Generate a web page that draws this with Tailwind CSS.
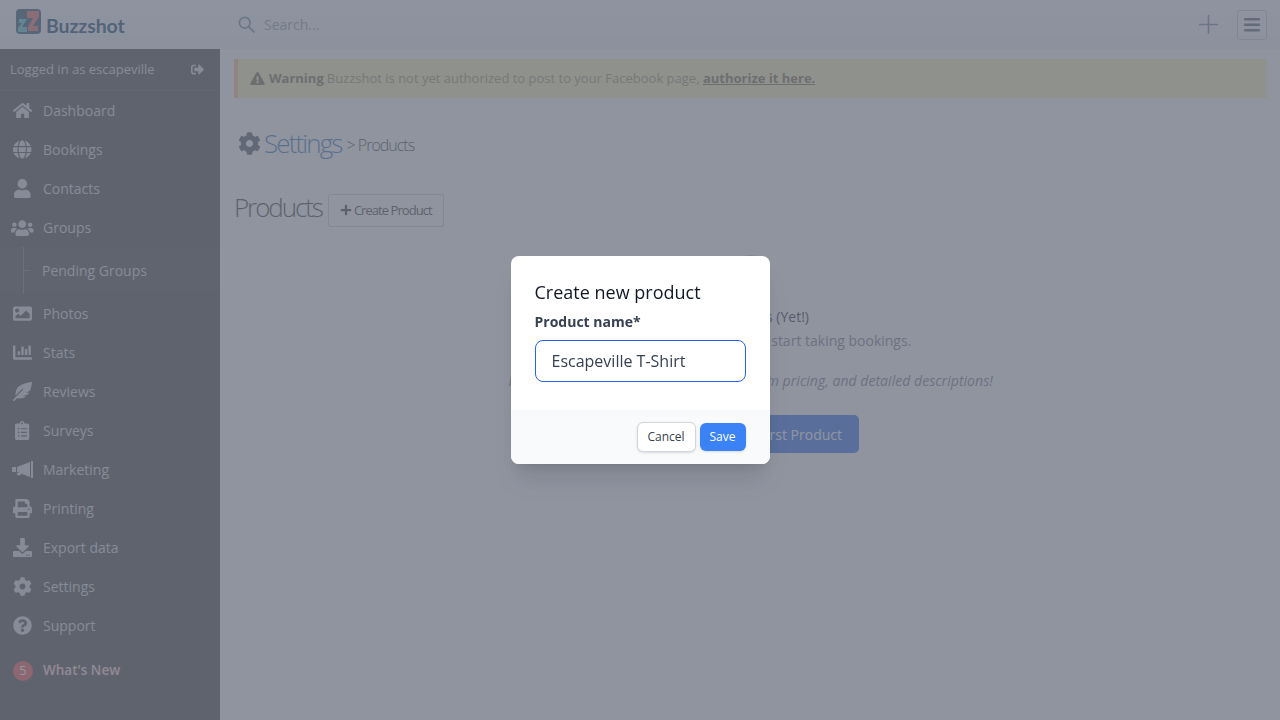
<!DOCTYPE html>
<html lang="en">
<head>
  <meta charset="UTF-8">
  <meta name="viewport" content="width=device-width, initial-scale=1.0">
  <title>Buzzshot - Products</title>
  <script src="https://cdn.jsdelivr.net/npm/@tailwindcss/browser@4"></script>
</head>
<body class="h-screen overflow-hidden flex flex-col bg-[#fbfbfc] font-['Open_Sans',sans-serif] text-[#333]">

  <!-- top bar -->
  <header class="h-[49px] shrink-0 flex items-center bg-gradient-to-b from-[#f8f9fb] to-[#eceef2]">
    <div class="w-[220px] shrink-0 flex items-center pl-[16px]">
      <svg class="w-[25px] h-[25px] -mt-[7px]" viewBox="0 0 25 25">
        <rect width="25" height="25" rx="4" fill="#1d4766"/>
        <path d="M3 10h8l-5 8h5v5H2v-4l4-5H3z" fill="#4cc0c0"/>
        <path d="M11 2h12v6l-6 9h5v5H12v-4l5-9h-6z" fill="#e8605a"/>
      </svg>
      <span class="ml-[5px] mt-[2px] text-[19.500px] leading-none font-bold tracking-[-0.1px] text-[#0b3a63] font-['Lato',sans-serif]">Buzzshot</span>
    </div>
    <div class="flex-1 flex items-center pl-[18px] pr-[13px]">
      <svg class="w-[17px] h-[17px]" viewBox="0 0 24 24" fill="none" stroke="#6a8299" stroke-width="2.400" stroke-linecap="round"><circle cx="9.500" cy="9.500" r="7.500"/><path d="M15 15l7.500 7.500"/></svg>
      <span class="ml-[9px] text-[14px] text-[#8a96a8]">Search...</span>
      <svg class="ml-auto w-[19px] h-[19px]" viewBox="0 0 19 19" stroke="#6f8098" stroke-width="1.600"><path d="M9.500 0v19M0 9.500h19"/></svg>
      <div class="ml-[19px] w-[30px] h-[30px] flex items-center justify-center rounded-[3px] border border-[#c0c3ca]">
        <svg class="w-[16px] h-[14px]" viewBox="0 0 16 14" fill="#4b5563"><rect width="16" height="2.600" rx="1" y="0"/><rect width="16" height="2.600" rx="1" y="5.500"/><rect width="16" height="2.600" rx="1" y="11"/></svg>
      </div>
    </div>
  </header>

  <div class="flex-1 flex min-h-0">
    <!-- sidebar -->
    <aside class="w-[220px] shrink-0 bg-[#3c3a3a] text-[#d5d6da] text-[14px]">
      <div class="h-[42px] flex items-center justify-between pl-[10px] pr-[16px] border-b border-[#4a4a4c] text-[13px]">
        <span>Logged in as escapeville</span>
        <svg class="w-[13px] h-[13px]" viewBox="0 0 512 512" fill="currentColor"><path d="M497 273L329 441c-15 15-41 4.500-41-17v-96H152c-13.300 0-24-10.700-24-24v-96c0-13.300 10.700-24 24-24h136V88c0-21.400 25.900-32 41-17l168 168c9.300 9.400 9.300 24.600 0 34zM192 436v-40c0-6.600-5.400-12-12-12H96c-17.700 0-32-14.300-32-32V160c0-17.700 14.300-32 32-32h84c6.600 0 12-5.400 12-12V76c0-6.600-5.400-12-12-12H96c-53 0-96 43-96 96v192c0 53 43 96 96 96h84c6.600 0 12-5.400 12-12z"/></svg>
      </div>
      <nav class="flex flex-col">
        <a class="h-[39px] flex items-center"><span class="w-[43px] flex justify-center pl-[2px]"><svg class="h-[17px]" viewBox="0 0 576 512" fill="currentColor"><path d="M280.370 148.260L96 300.110V464a16 16 0 0 0 16 16l112.060-.29a16 16 0 0 0 15.920-16V368a16 16 0 0 1 16-16h64a16 16 0 0 1 16 16v95.640a16 16 0 0 0 16 16.050L464 480a16 16 0 0 0 16-16V300L295.670 148.260a12.190 12.190 0 0 0-15.300 0zM571.600 251.470L488 182.560V44.050a12 12 0 0 0-12-12h-56a12 12 0 0 0-12 12v72.610L318.470 43a48 48 0 0 0-61 0L4.340 251.470a12 12 0 0 0-1.600 16.900l25.500 31A12 12 0 0 0 45.150 301l235.220-193.740a12.190 12.190 0 0 1 15.300 0L530.900 301a12 12 0 0 0 16.900-1.600l25.500-31a12 12 0 0 0-1.700-16.930z"/></svg></span>Dashboard</a>
        <a class="h-[39px] flex items-center"><span class="w-[43px] flex justify-center pl-[2px]"><svg class="h-[19px]" viewBox="0 0 496 512" fill="currentColor"><path d="M336.500 160C322 70.700 287.800 8 248 8s-74 62.700-88.500 152h177zM152 256c0 22.200 1.200 43.500 3.300 64h185.300c2.100-20.500 3.300-41.800 3.300-64s-1.200-43.500-3.300-64H155.300c-2.100 20.500-3.300 41.800-3.300 64zm324.700-96c-28.600-67.900-86.500-120.400-158-141.600 24.400 33.800 41.200 84.700 50 141.600h108zM177.200 18.400C105.800 39.600 47.800 92.100 19.300 160h108c8.700-56.900 25.500-107.800 49.900-141.600zM487.400 192H372.700c2.100 21 3.300 42.500 3.300 64s-1.200 43-3.300 64h114.600c5.500-20.500 8.600-41.800 8.600-64s-3.100-43.500-8.500-64zM120 256c0-21.500 1.200-43 3.300-64H8.600C3.200 212.500 0 233.800 0 256s3.200 43.500 8.600 64h114.600c-2-21-3.200-42.500-3.200-64zm39.500 96c14.500 89.300 48.700 152 88.500 152s74-62.700 88.500-152h-177zm159.300 141.600c71.400-21.200 129.400-73.700 158-141.600h-108c-8.800 56.900-25.600 107.800-50 141.600zM19.300 352c28.600 67.900 86.500 120.400 158 141.600-24.400-33.800-41.200-84.700-50-141.600h-108z"/></svg></span>Bookings</a>
        <a class="h-[39px] flex items-center"><span class="w-[43px] flex justify-center pl-[2px]"><svg class="h-[19px]" viewBox="0 0 448 512" fill="currentColor"><path d="M224 256c70.700 0 128-57.300 128-128S294.700 0 224 0 96 57.300 96 128s57.300 128 128 128zm89.600 32h-16.700c-22.200 10.200-46.900 16-72.900 16s-50.600-5.800-72.900-16h-16.700C60.200 288 0 348.200 0 422.400V464c0 26.500 21.500 48 48 48h352c26.500 0 48-21.500 48-48v-41.600c0-74.200-60.200-134.400-134.400-134.400z"/></svg></span>Contacts</a>
        <a class="h-[39px] flex items-center"><span class="w-[43px] flex justify-center pl-[2px]"><svg class="h-[18px]" viewBox="0 0 640 512" fill="currentColor"><path d="M96 224c35.300 0 64-28.700 64-64s-28.700-64-64-64-64 28.700-64 64 28.700 64 64 64zm448 0c35.300 0 64-28.700 64-64s-28.700-64-64-64-64 28.700-64 64 28.700 64 64 64zm32 32h-64c-17.600 0-33.500 7.100-45.100 18.600 40.300 22.100 68.900 62 75.100 109.400h66c17.700 0 32-14.300 32-32v-32c0-35.300-28.700-64-64-64zm-256 0c61.900 0 112-50.100 112-112S381.900 32 320 32 208 82.100 208 144s50.100 112 112 112zm76.800 32h-8.300c-20.800 10-43.900 16-68.500 16s-47.600-6-68.500-16h-8.300C179.600 288 128 339.600 128 403.200V432c0 26.500 21.500 48 48 48h288c26.500 0 48-21.500 48-48v-28.800c0-63.600-51.600-115.200-115.200-115.200zm-223.700-13.400C161.500 263.100 145.600 256 128 256H64c-35.300 0-64 28.700-64 64v32c0 17.700 14.300 32 32 32h65.900c6.300-47.400 34.900-87.300 75.200-109.400z"/></svg></span>Groups</a>
        <div class="relative h-[47px] flex items-center pl-[42px] bg-[#403e3e]">
          <span class="absolute left-[23px] top-0 bottom-0 w-px bg-[#6e6e72]"></span>
          <span class="absolute left-[23px] top-[23px] w-[8px] h-px bg-[#6e6e72]"></span>
          Pending Groups
        </div>
        <a class="h-[39px] flex items-center"><span class="w-[43px] flex justify-center pl-[2px]"><svg class="h-[19px]" viewBox="0 0 512 512" fill="currentColor"><path d="M464 448H48c-26.510 0-48-21.490-48-48V112c0-26.510 21.490-48 48-48h416c26.510 0 48 21.490 48 48v288c0 26.510-21.490 48-48 48zM112 120c-30.928 0-56 25.072-56 56s25.072 56 56 56 56-25.072 56-56-25.072-56-56-56zM64 384h384V272l-87.515-87.515c-4.686-4.686-12.284-4.686-16.971 0L208 320l-55.515-55.515c-4.686-4.686-12.284-4.686-16.971 0L64 336v48z"/></svg></span>Photos</a>
        <a class="h-[39px] flex items-center"><span class="w-[43px] flex justify-center pl-[2px]"><svg class="h-[19px]" viewBox="0 0 512 512" fill="currentColor"><path d="M332.800 320h38.400c6.400 0 12.800-6.400 12.800-12.800V172.800c0-6.400-6.400-12.800-12.800-12.800h-38.400c-6.400 0-12.800 6.400-12.800 12.800v134.400c0 6.400 6.400 12.800 12.800 12.800zm96 0h38.400c6.400 0 12.800-6.400 12.800-12.800V76.800c0-6.400-6.400-12.800-12.800-12.800h-38.400c-6.400 0-12.800 6.400-12.800 12.800v230.400c0 6.400 6.400 12.800 12.800 12.800zm-288 0h38.400c6.400 0 12.800-6.400 12.800-12.800v-70.400c0-6.400-6.400-12.800-12.800-12.800h-38.400c-6.400 0-12.800 6.400-12.800 12.800v70.400c0 6.400 6.400 12.800 12.800 12.800zm96 0h38.400c6.400 0 12.800-6.400 12.800-12.800V108.800c0-6.400-6.400-12.800-12.800-12.800h-38.400c-6.400 0-12.800 6.400-12.800 12.800v198.400c0 6.400 6.400 12.800 12.800 12.800zM496 384H64V80c0-8.840-7.160-16-16-16H16C7.160 64 0 71.160 0 80v336c0 17.670 14.330 32 32 32h464c8.840 0 16-7.160 16-16v-32c0-8.840-7.160-16-16-16z"/></svg></span>Stats</a>
        <a class="h-[39px] flex items-center"><span class="w-[43px] flex justify-center pl-[2px]"><svg class="h-[19px]" viewBox="0 0 512 512" fill="currentColor"><path d="M512 0C460.220 3.560 96.440 38.200 71.010 287.610c-3.090 26.660-4.840 53.440-5.990 80.240l178.870-178.690c6.250-6.250 16.400-6.250 22.650 0s6.250 16.380 0 22.630L7.040 471.030c-9.380 9.370-9.380 24.570 0 33.940 9.380 9.370 24.590 9.370 33.980 0l57.130-57.070c42.090-.14 84.150-2.530 125.960-7.360 53.480-5.440 97.020-26.470 132.580-56.540H255.740l146.790-48.880c11.250-14.890 21.370-30.710 30.450-47.120h-81.140l106.540-53.210C500.290 132.860 510.190 26.260 512 0z"/></svg></span>Reviews</a>
        <a class="h-[39px] flex items-center"><span class="w-[43px] flex justify-center pl-[2px]"><svg class="h-[19px]" viewBox="0 0 384 512" fill="currentColor"><path d="M336 64h-80c0-35.300-28.700-64-64-64s-64 28.700-64 64H48C21.500 64 0 85.500 0 112v352c0 26.500 21.500 48 48 48h288c26.500 0 48-21.500 48-48V112c0-26.500-21.500-48-48-48zM96 424c-13.300 0-24-10.700-24-24s10.700-24 24-24 24 10.700 24 24-10.700 24-24 24zm0-96c-13.300 0-24-10.700-24-24s10.700-24 24-24 24 10.700 24 24-10.700 24-24 24zm0-96c-13.300 0-24-10.700-24-24s10.700-24 24-24 24 10.700 24 24-10.700 24-24 24zm96-192c13.300 0 24 10.700 24 24s-10.700 24-24 24-24-10.700-24-24 10.700-24 24-24zm128 368c0 4.400-3.600 8-8 8H168c-4.400 0-8-3.600-8-8v-16c0-4.400 3.600-8 8-8h144c4.400 0 8 3.600 8 8v16zm0-96c0 4.400-3.600 8-8 8H168c-4.400 0-8-3.600-8-8v-16c0-4.400 3.600-8 8-8h144c4.400 0 8 3.600 8 8v16zm0-96c0 4.400-3.600 8-8 8H168c-4.400 0-8-3.600-8-8v-16c0-4.400 3.600-8 8-8h144c4.400 0 8 3.600 8 8v16z"/></svg></span>Surveys</a>
        <a class="h-[39px] flex items-center"><span class="w-[43px] flex justify-center pl-[2px]"><svg class="w-[21px] h-[17px]" viewBox="0 0 21 17" fill="currentColor"><path d="M1 6h3v5H1a1 1 0 0 1-1-1V7a1 1 0 0 1 1-1zM5 6l13-5v15L5 11z"/><rect x="19" y="0" width="2" height="17" rx=".5"/><path d="M5 12h4.500a2.500 2.500 0 0 1-4.500 1.500z"/></svg></span>Marketing</a>
        <a class="h-[39px] flex items-center"><span class="w-[43px] flex justify-center pl-[2px]"><svg class="h-[19px]" viewBox="0 0 512 512" fill="currentColor"><path d="M448 192V77.250c0-8.490-3.370-16.620-9.370-22.630L393.370 9.370c-6-6-14.140-9.370-22.630-9.370H96C78.330 0 64 14.330 64 32v160c-35.350 0-64 28.650-64 64v112c0 8.840 7.160 16 16 16h48v96c0 17.670 14.330 32 32 32h320c17.670 0 32-14.330 32-32v-96h48c8.840 0 16-7.160 16-16V256c0-35.350-28.650-64-64-64zm-64 256H128v-96h256v96zm0-224H128V64h192v48c0 8.840 7.160 16 16 16h48v96zm48 72c-13.250 0-24-10.750-24-24 0-13.260 10.750-24 24-24s24 10.740 24 24c0 13.250-10.750 24-24 24z"/></svg></span>Printing</a>
        <a class="h-[39px] flex items-center"><span class="w-[43px] flex justify-center pl-[2px]"><svg class="h-[19px]" viewBox="0 0 512 512" fill="currentColor"><path d="M216 0h80c13.300 0 24 10.700 24 24v168h87.700c17.800 0 26.700 21.500 14.100 34.100L269.700 378.300c-7.500 7.500-19.800 7.500-27.300 0L90.100 226.100c-12.600-12.600-3.700-34.100 14.100-34.100H192V24c0-13.300 10.700-24 24-24zm296 376v112c0 13.300-10.700 24-24 24H24c-13.300 0-24-10.700-24-24V376c0-13.300 10.700-24 24-24h146.700l49 49c20.100 20.100 52.500 20.100 72.600 0l49-49H488c13.300 0 24 10.700 24 24zm-124 88c0-11-9-20-20-20s-20 9-20 20 9 20 20 20 20-9 20-20zm64 0c0-11-9-20-20-20s-20 9-20 20 9 20 20 20 20-9 20-20z"/></svg></span>Export data</a>
        <a class="h-[39px] flex items-center"><span class="w-[43px] flex justify-center pl-[2px]"><svg class="h-[19px]" viewBox="0 0 512 512" fill="currentColor"><path d="M487.400 315.700l-42.600-24.600c4.300-23.200 4.300-47 0-70.200l42.600-24.600c4.900-2.800 7.100-8.600 5.500-14-11.100-35.600-30-67.800-54.700-94.600-3.800-4.100-10-5.100-14.800-2.300L380.800 110c-17.900-15.400-38.500-27.300-60.800-35.100V25.800c0-5.600-3.900-10.500-9.400-11.700-36.700-8.200-74.300-7.800-109.200 0-5.500 1.200-9.400 6.100-9.400 11.700V75c-22.200 7.900-42.800 19.800-60.800 35.100L88.700 85.500c-4.900-2.800-11-1.900-14.800 2.300-24.700 26.700-43.600 58.900-54.700 94.600-1.700 5.400.6 11.200 5.500 14L67.300 221c-4.300 23.200-4.300 47 0 70.200l-42.600 24.600c-4.900 2.800-7.100 8.600-5.500 14 11.100 35.600 30 67.800 54.700 94.600 3.800 4.100 10 5.100 14.800 2.300l42.600-24.600c17.900 15.400 38.500 27.300 60.800 35.100v49.200c0 5.600 3.900 10.500 9.400 11.700 36.700 8.200 74.300 7.800 109.200 0 5.500-1.200 9.400-6.100 9.400-11.700v-49.200c22.200-7.900 42.800-19.800 60.800-35.100l42.600 24.600c4.900 2.800 11 1.900 14.800-2.300 24.700-26.700 43.600-58.900 54.700-94.600 1.500-5.500-.7-11.300-5.600-14.100zM256 336c-44.100 0-80-35.900-80-80s35.900-80 80-80 80 35.900 80 80-35.900 80-80 80z"/></svg></span>Settings</a>
        <a class="h-[39px] flex items-center"><span class="w-[43px] flex justify-center pl-[2px]"><svg class="h-[19px]" viewBox="0 0 512 512" fill="currentColor"><path d="M504 256c0 136.997-111.043 248-248 248S8 392.997 8 256C8 119.083 119.043 8 256 8s248 111.083 248 248zM262.655 90c-54.497 0-89.255 22.957-116.549 63.758-3.536 5.286-2.353 12.415 2.715 16.258l34.699 26.310c5.205 3.947 12.621 3.008 16.665-2.122 17.864-22.658 30.113-35.797 57.303-35.797 20.429 0 45.698 13.148 45.698 32.958 0 14.976-12.363 22.667-32.534 33.976C247.128 238.528 216 254.941 216 296v4c0 6.627 5.373 12 12 12h56c6.627 0 12-5.373 12-12v-1.333c0-28.462 83.186-29.647 83.186-106.667 0-58.002-60.165-102-116.531-102zM256 338c-25.365 0-46 20.635-46 46 0 25.364 20.635 46 46 46s46-20.636 46-46c0-25.365-20.635-46-46-46z"/></svg></span>Support</a>
        <a class="mt-[6px] h-[39px] flex items-center font-semibold text-[13.500px] text-[#ffd0d0]"><span class="w-[43px] flex pl-[13px]"><span class="w-[20px] h-[20px] rounded-full bg-[#ef4444] flex items-center justify-center text-[13px] font-normal text-white">5</span></span>What's New</a>
      </nav>
    </aside>

    <!-- main content -->
    <main class="flex-1 min-w-0 pl-[14px] pr-[13px] pt-[10px]">
      <div class="h-[39px] flex items-center pl-[12px] border-l-[4px] border-[#f6c177] bg-[#f7eeb0] text-[13px] text-[#9a8a60]">
        <svg class="w-[15px] h-[13px] mr-[4px]" viewBox="0 0 576 512" fill="#7a6240"><path d="M569.517 440.013C587.975 472.007 564.806 512 527.940 512H48.054c-36.937 0-59.999-40.055-41.577-71.987L246.423 24.035c18.467-32.009 64.720-31.951 83.154 0l239.940 416.028zM288 354c-25.405 0-46 20.595-46 46s20.595 46 46 46 46-20.595 46-46-20.595-46-46-46zm-43.673-165.346l7.418 136c.347 6.364 5.609 11.346 11.982 11.346h48.546c6.373 0 11.635-4.982 11.982-11.346l7.418-136c.375-6.874-5.098-12.654-11.982-12.654h-63.383c-6.884 0-12.356 5.780-11.981 12.654z"/></svg>
        <b class="font-bold text-[#7a6240] mr-[3px]">Warning</b> Buzzshot is not yet authorized to post to your Facebook page,&nbsp;<a class="font-bold text-[#7a6240] underline">authorize it here.</a>
      </div>

      <div class="mt-[27px] flex items-center pl-[4px]">
        <svg class="w-[23px] h-[23px] text-[#444b58]" viewBox="0 0 512 512" fill="currentColor"><path d="M487.400 315.700l-42.600-24.600c4.300-23.200 4.300-47 0-70.200l42.600-24.600c4.900-2.800 7.100-8.600 5.500-14-11.100-35.600-30-67.800-54.700-94.600-3.800-4.100-10-5.100-14.800-2.300L380.800 110c-17.900-15.400-38.500-27.300-60.800-35.100V25.800c0-5.600-3.900-10.500-9.400-11.700-36.700-8.200-74.300-7.800-109.200 0-5.500 1.200-9.400 6.100-9.400 11.700V75c-22.200 7.900-42.800 19.800-60.800 35.100L88.700 85.500c-4.900-2.800-11-1.900-14.800 2.300-24.700 26.700-43.600 58.900-54.700 94.600-1.700 5.400.6 11.200 5.500 14L67.300 221c-4.300 23.200-4.300 47 0 70.200l-42.600 24.600c-4.900 2.800-7.100 8.600-5.500 14 11.100 35.600 30 67.800 54.700 94.600 3.800 4.100 10 5.100 14.800 2.300l42.600-24.600c17.900 15.400 38.500 27.300 60.800 35.100v49.200c0 5.600 3.900 10.500 9.400 11.700 36.700 8.200 74.300 7.800 109.200 0 5.500-1.200 9.400-6.100 9.400-11.700v-49.200c22.200-7.900 42.800-19.800 60.800-35.100l42.600 24.600c4.900 2.800 11 1.900 14.800-2.300 24.700-26.700 43.600-58.900 54.700-94.600 1.500-5.500-.7-11.300-5.600-14.100zM256 336c-44.100 0-80-35.900-80-80s35.900-80 80-80 80 35.900 80 80-35.900 80-80 80z"/></svg>
        <span class="ml-[3px] text-[26px] leading-[36px] font-light tracking-[-1.900px] text-[#1f6bb5]">Settings</span>
        <span class="ml-[5px] mt-[3px] text-[16px] font-light tracking-[-1px] text-[#333]">&gt; Products</span>
      </div>

      <div class="mt-[28px] flex items-center">
        <h2 class="mb-[6px] text-[26px] leading-[36px] font-light tracking-[-2.100px] text-[#333]">Products</h2>
        <button class="ml-[6px] h-[33px] w-[116px] flex items-center justify-center rounded-[2px] border border-[#ccc] text-[13px] tracking-[-0.950px] text-[#333]">
          <svg class="w-[12px] h-[12px] mr-[2px]" viewBox="0 0 448 512" fill="#333"><path d="M416 208H272V64c0-17.670-14.330-32-32-32h-32c-17.670 0-32 14.330-32 32v144H32c-17.670 0-32 14.330-32 32v32c0 17.670 14.330 32 32 32h144v144c0 17.670 14.330 32 32 32h32c17.670 0 32-14.330 32-32V304h144c17.670 0 32-14.330 32-32v-32c0-17.670-14.330-32-32-32z"/></svg>
          <span class="pt-[1px]">Create Product</span>
        </button>
      </div>

      <!-- empty state, mostly behind the dialog -->
      <div class="mt-[24px] flex flex-col items-center text-center">
        <div class="w-[36px] h-[36px] rounded-full bg-[#c4c8d0]"></div>
        <p class="mt-[16px] text-[14px] leading-[20px] font-medium text-[#111827]">No Products (Yet!)</p>
        <p class="mt-[4px] text-[14px] leading-[20px] text-[#6b7280]">Create your first product to start taking bookings.</p>
        <p class="mt-[20px] text-[14px] leading-[20px] italic tracking-[0.040px] text-[#6b7280]">Products can have photos, variants, custom pricing, and detailed descriptions!</p>
        <button class="mt-[24px] h-[38px] w-[217px] flex items-center justify-end pr-[17px] rounded-[5px] bg-[#2563eb] text-[14px] font-medium text-white">Create Your First Product</button>
      </div>
    </main>
  </div>

  <!-- dialog backdrop -->
  <div class="fixed inset-0 flex items-center justify-center bg-[#6b7280]/75">
    <div class="w-[259px] h-[208px] rounded-[8px] overflow-hidden bg-white shadow-xl flex flex-col">
      <div class="flex-1 px-[24px] pt-[24px]">
        <h3 class="text-[18px] leading-[24px] font-normal text-[#111827]">Create new product</h3>
        <label class="mt-[8px] block text-[14px] leading-[20px] font-bold text-[#374151]">Product name*</label>
        <input class="mt-[8px] w-[211px] h-[42px] px-[16px] rounded-[8px] border border-[#2563eb] text-[16px] text-[#374151] outline-none" value="Escapeville T-Shirt">
      </div>
      <div class="h-[54px] flex items-center justify-end gap-[4px] px-[24px] bg-[#f9fafb]">
        <button class="w-[59px] h-[30px] rounded-[6px] border border-[#d1d5db] bg-white text-[12px] font-normal text-[#374151] shadow-sm">Cancel</button>
        <button class="w-[46px] h-[28px] rounded-[6px] bg-[#3b82f6] text-[12px] font-medium text-white shadow-sm">Save</button>
      </div>
    </div>
  </div>
</body>
</html>
